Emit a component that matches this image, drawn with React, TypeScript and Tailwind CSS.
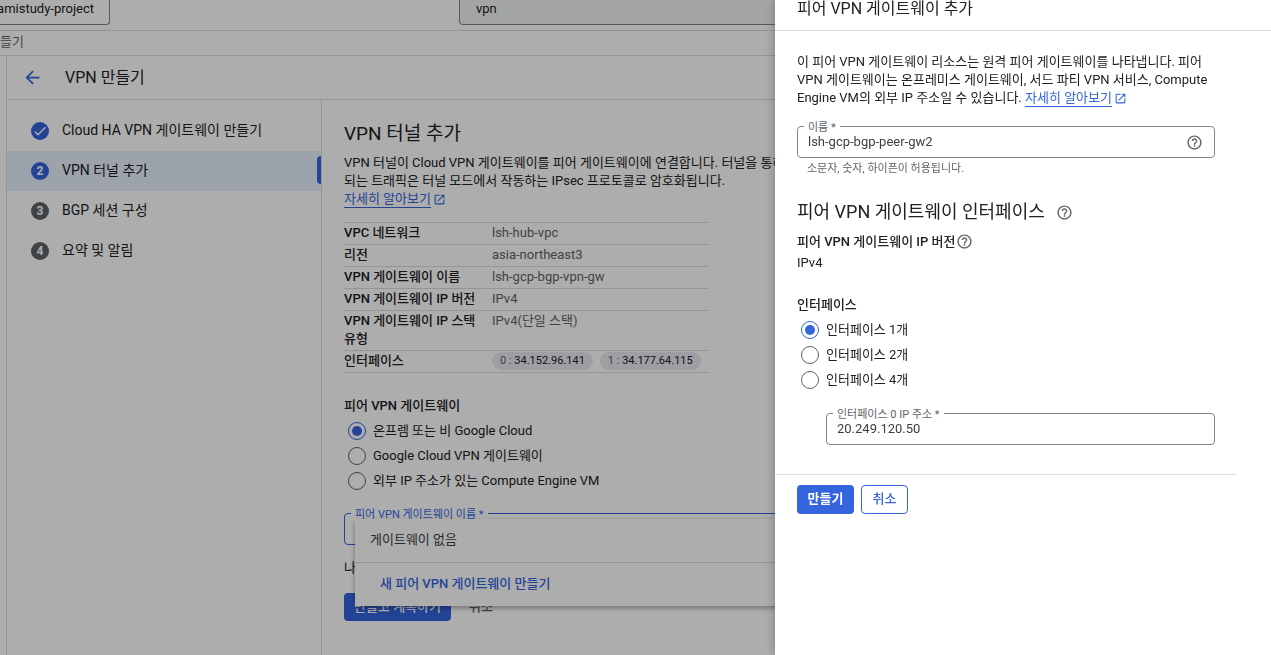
import React, { useState } from 'react';
import { MdArrowBack, MdCheck, MdHelpOutline, MdOpenInNew } from 'react-icons/md';

const steps = [
  { id: 1, label: 'Cloud HA VPN 게이트웨이 만들기', state: 'done' },
  { id: 2, label: 'VPN 터널 추가', state: 'active' },
  { id: 3, label: 'BGP 세션 구성', state: 'todo' },
  { id: 4, label: '요약 및 알림', state: 'todo' },
];

const details = [
  { label: 'VPC 네트워크', value: 'lsh-hub-vpc' },
  { label: '리전', value: 'asia-northeast3' },
  { label: 'VPN 게이트웨이 이름', value: 'lsh-gcp-bgp-vpn-gw' },
  { label: 'VPN 게이트웨이 IP 버전', value: 'IPv4' },
  { label: 'VPN 게이트웨이 IP 스택 유형', value: 'IPv4(단일 스택)' },
];

const interfaces = ['34.152.96.141', '34.177.64.115'];

const LearnMore: React.FC = () => (
  <a href="#" className="inline-flex h-[18px] items-center gap-0.5 text-[#3465de]">
    <span className="border-b border-[#3465de] leading-4">자세히 알아보기</span>
    <MdOpenInNew className="h-[13px] w-[13px]" />
  </a>
);

type RadioGroupProps = {
  name: string;
  legend: string;
  options: string[];
};

const RadioGroup: React.FC<RadioGroupProps> = ({ name, legend, options }) => {
  const [selected, setSelected] = useState(0);

  return (
    <fieldset>
      <legend className="mb-1 font-medium">{legend}</legend>
      {options.map((option, index) => (
        <label key={option} className="flex h-[25px] items-center gap-[7px] pl-1">
          <input
            type="radio"
            name={name}
            checked={selected === index}
            onChange={() => setSelected(index)}
            className="grid h-[18px] w-[18px] shrink-0 appearance-none place-content-center rounded-full border border-[#5f6368] before:h-2.5 before:w-2.5 before:rounded-full checked:border-[#3465de] checked:before:bg-[#3465de]"
          />
          <span>{option}</span>
        </label>
      ))}
    </fieldset>
  );
};

const TopBar: React.FC = () => (
  <header className="flex h-[31px] items-start justify-between border-b border-[#dadce0]">
    <button className="flex h-[25px] w-[110px] justify-end rounded-br border-r border-b border-[#80868b] pr-[15px] leading-[18px] whitespace-nowrap">
      amistudy-project
    </button>
    <input
      type="text"
      aria-label="검색"
      defaultValue="vpn"
      className="h-[25px] w-[812px] rounded-b border border-t-0 border-[#80868b] bg-[#f1f3f4] px-4 pb-[7px]"
    />
  </header>
);

const Stepper: React.FC = () => (
  <nav className="w-[315px] shrink-0 border-r border-[#dadce0] pt-[11px]">
    <ol>
      {steps.map((step) => (
        <li
          key={step.id}
          className={
            step.state === 'active'
              ? 'relative flex h-10 items-center gap-[13px] bg-[#e8f0fe] pl-6 text-sm'
              : 'relative flex h-10 items-center gap-[13px] pl-6 text-sm'
          }
        >
          <span
            className={
              step.state === 'todo'
                ? 'flex h-[18px] w-[18px] items-center justify-center rounded-full bg-[#5f6368] text-xs font-bold text-white'
                : 'flex h-[18px] w-[18px] items-center justify-center rounded-full bg-[#3465de] text-xs font-bold text-white'
            }
          >
            {step.state === 'done' ? <MdCheck className="h-4 w-4" /> : step.id}
          </span>
          <span className="pb-0.5">{step.label}</span>
          {step.state === 'active' && <span className="absolute top-[5px] right-0 h-7 w-1 rounded-l bg-[#3465de]" />}
        </li>
      ))}
    </ol>
  </nav>
);

const TunnelForm: React.FC = () => (
  <section className="min-w-0 flex-1 pt-[22px] pl-[22px]">
    <h2 className="text-[19px] leading-6">VPN 터널 추가</h2>
    <p className="mt-2 whitespace-nowrap">
      VPN 터널이 Cloud VPN 게이트웨이를 피어 게이트웨이에 연결합니다. 터널을 통해
      <br />
      되는 트래픽은 터널 모드에서 작동하는 IPsec 프로토콜로 암호화됩니다.
      <br />
      <LearnMore />
    </p>

    <table className="mt-[13px] w-[364px] border-t border-[#dadce0] text-left">
      <tbody>
        {details.map((row) => (
          <tr key={row.label} className="border-b border-[#dadce0] align-top">
            <th className="w-[148px] pt-px pr-3 pb-0.5 font-medium break-keep">{row.label}</th>
            <td className="pt-px pb-0.5 text-[#5f6368]">{row.value}</td>
          </tr>
        ))}
        <tr className="border-b border-[#dadce0] align-top">
          <th className="pt-px pb-0.5 font-medium">인터페이스</th>
          <td className="pt-px pb-0.5">
            <div className="flex gap-[7px]">
              {interfaces.map((ip, index) => (
                <span key={ip} className="rounded-full bg-[#e8eaf0] px-2 text-[11px] whitespace-nowrap">
                  <span className="text-[#5f6368]">{index} : </span>
                  {ip}
                </span>
              ))}
            </div>
          </td>
        </tr>
      </tbody>
    </table>

    <div className="mt-6">
      <RadioGroup
        name="peer"
        legend="피어 VPN 게이트웨이"
        options={['온프렘 또는 비 Google Cloud', 'Google Cloud VPN 게이트웨이', '외부 IP 주소가 있는 Compute Engine VM']}
      />
    </div>

    <div className="relative mt-[19px]">
      <select
        id="peer-gateway"
        className="block h-8 w-full appearance-none rounded border border-[#3465de]"
      />
      <label
        htmlFor="peer-gateway"
        className="absolute -top-1.5 left-[7px] bg-white px-1 text-[11px] leading-4 text-[#3465de]"
      >
        피어 VPN 게이트웨이 이름 *
      </label>
      {/* Gateway dropdown panel */}
      <div className="absolute top-[6px] right-0 left-[11px] bg-white shadow-[0_2px_5px_rgba(0,0,0,0.35)]">
        <div className="flex h-[43px] items-center px-[15px] text-[#3c4043]">게이트웨이 없음</div>
        <button className="flex h-11 w-full items-center border-t border-[#dadce0] px-[25px] font-medium text-[#3465de]">
          새 피어 VPN 게이트웨이 만들기
        </button>
      </div>
    </div>
    <p className="mt-[14px]">나중에</p>
    <div className="mt-4 flex">
      <button className="h-7 w-[107px] rounded bg-[#3465de] font-medium whitespace-nowrap text-white">
        만들고 계속하기
      </button>
      <button className="h-7 px-[18px] font-medium text-[#5f6368]">취소</button>
    </div>
  </section>
);

type TextFieldProps = {
  id: string;
  label: string;
  value: string;
  help?: boolean;
};

const TextField: React.FC<TextFieldProps> = ({ id, label, value, help }) => (
  <div className="relative">
    <input
      id={id}
      type="text"
      defaultValue={value}
      className="block h-8 w-full rounded border border-[#80868b] px-2.5 text-[#3c4043]"
    />
    <label htmlFor={id} className="absolute -top-1.5 left-[7px] bg-white px-1 text-[11px] leading-4 text-[#5f6368]">
      {label}
    </label>
    {help && <MdHelpOutline className="absolute top-2 right-3 h-[17px] w-[17px] text-[#5f6368]" />}
  </div>
);

const PeerGatewayDrawer: React.FC = () => (
  <aside className="fixed inset-y-0 right-0 w-[496px] bg-white shadow-[0_0_10px_rgba(0,0,0,0.3)]">
    <h2 className="h-[31px] border-b border-[#dadce0] pl-[22px] text-base leading-[18px]">피어 VPN 게이트웨이 추가</h2>
    <div className="pt-[22px] pr-14 pl-[22px]">
      <p className="whitespace-nowrap">
        이 피어 VPN 게이트웨이 리소스는 원격 피어 게이트웨이를 나타냅니다. 피어
        <br />
        VPN 게이트웨이는 온프레미스 게이트웨이, 서드 파티 VPN 서비스, Compute
        <br />
        Engine VM의 외부 IP 주소일 수 있습니다. <LearnMore />
      </p>
      <div className="mt-[18px]">
        <TextField id="gateway-name" label="이름 *" value="lsh-gcp-bgp-peer-gw2" help />
        <p className="mt-0.5 pl-2.5 text-[11px] text-[#5f6368]">소문자, 숫자, 하이픈이 허용됩니다.</p>
      </div>

      <h3 className="mt-[22px] flex items-center gap-[11px] text-lg leading-6">
        피어 VPN 게이트웨이 인터페이스
        <MdHelpOutline className="mt-0.5 h-[17px] w-[17px] text-[#5f6368]" />
      </h3>
      <h4 className="mt-[9px] flex items-center gap-px font-medium">
        피어 VPN 게이트웨이 IP 버전
        <MdHelpOutline className="h-[17px] w-[17px] text-[#5f6368]" />
      </h4>
      <p className="mt-[3px]">IPv4</p>

      <div className="mt-6">
        <RadioGroup
          name="interfaces"
          legend="인터페이스"
          options={['인터페이스 1개', '인터페이스 2개', '인터페이스 4개']}
        />
      </div>
      <div className="mt-5 pl-[29px]">
        <TextField id="interface-ip" label="인터페이스 0 IP 주소 *" value="20.249.120.50" />
      </div>
    </div>

    <div className="mt-[29px] mr-[35px] flex gap-[7px] border-t border-[#dadce0] pt-2.5 pl-[22px]">
      <button className="h-[29px] w-[57px] rounded bg-[#3465de] font-bold text-white">만들기</button>
      <button className="h-[29px] w-[47px] rounded border border-[#3465de] font-medium text-[#3465de]">취소</button>
    </div>
  </aside>
);

export default function App() {
  return (
    <div className="flex h-screen flex-col overflow-hidden bg-white font-['Roboto','Noto_Sans_CJK_KR',sans-serif] text-[13px] leading-[18px] text-[#202124]">
      <TopBar />
      <div className="h-[25px] border-b border-[#dadce0] pt-0.5 text-[#5f6368]">들기</div>
      <main className="ml-1.5 flex flex-1 flex-col border-l border-[#dadce0]">
        <div className="flex h-11 items-center gap-[22px] border-b border-[#dadce0] pl-[15px]">
          <button aria-label="뒤로">
            <MdArrowBack className="h-[21px] w-[21px] text-[#3465de]" />
          </button>
          <h1 className="text-base">VPN 만들기</h1>
        </div>
        <div className="flex flex-1">
          <Stepper />
          <TunnelForm />
        </div>
      </main>
      {/* Backdrop */}
      <div className="fixed inset-0 bg-black/32" />
      <PeerGatewayDrawer />
    </div>
  );
}
